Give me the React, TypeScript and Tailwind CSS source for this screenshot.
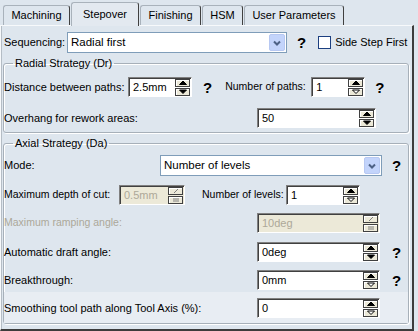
import React from 'react';

function Q({ className = '' }: { className?: string }) {
  return <span className={`text-[15px] font-bold leading-none text-black ${className}`}>?</span>;
}

function Arrow({ up, hollow, disabled }: { up?: boolean; hollow?: boolean; disabled?: boolean }) {
  const d = up ? 'M0.5 4.5 L4 1 L7.5 4.5 Z' : 'M0.5 1 L4 4.5 L7.5 1 Z';
  if (disabled) {
    return (
      <svg width="8" height="6" viewBox="0 0 8 6">
        <path d={up ? 'M2 5 L6 1' : 'M1 2 H7 M1 4 H7'} stroke="#808080" strokeWidth="1" fill="none" />
      </svg>
    );
  }
  return (
    <svg width="8" height="6" viewBox="0 0 8 6">
      <path d={d} fill={hollow ? 'white' : 'black'} stroke="black" strokeWidth="1" />
    </svg>
  );
}

function Spin({
  value,
  w,
  disabled,
  hollow,
}: {
  value: string;
  w: string;
  disabled?: boolean;
  hollow?: boolean;
}) {
  return (
    <div
      className={`flex h-[20px] shrink-0 border border-t-[#808080] border-l-[#808080] border-b-white border-r-white shadow-[inset_1px_1px_0_#404040] ${w} ${
        disabled ? 'bg-[#ece9d8]' : 'bg-white'
      }`}
    >
      <span className={`flex-1 pl-[4px] pt-[3px] text-[11px] leading-[13px] ${disabled ? 'text-[#aca899]' : 'text-black'}`}>
        {value}
      </span>
      <div className="flex w-[16px] flex-col gap-[1px] py-[1px] pr-[1px]">
        <div className="flex flex-1 items-center justify-center border border-[#404040] bg-[#ece9d8] shadow-[inset_1px_1px_0_white]">
          <Arrow up disabled={disabled} />
        </div>
        <div className="flex flex-1 items-center justify-center border border-[#404040] bg-[#ece9d8] shadow-[inset_1px_1px_0_white]">
          <Arrow hollow={hollow} disabled={disabled} />
        </div>
      </div>
    </div>
  );
}

function Combo({ value, w }: { value: string; w: string }) {
  return (
    <div className={`flex h-[21px] shrink-0 items-center border border-[#7f9db9] bg-white ${w}`}>
      <span className="flex-1 pl-[3px] pt-[1px] text-[11.5px] text-black">{value}</span>
      <div className="mr-[1px] flex h-[17px] w-[16px] items-center justify-center rounded-[2px] border border-[#b7c8f2] bg-[#c3d4fb]">
        <svg width="8" height="6" viewBox="0 0 8 6">
          <path d="M1 1.5 L4 4.5 L7 1.5" stroke="#4d6185" strokeWidth="2" fill="none" />
        </svg>
      </div>
    </div>
  );
}

function Tab({ label, w, active }: { label: string; w: string; active?: boolean }) {
  return (
    <div
      className={`flex items-center justify-center rounded-t-[3px] border-t border-l border-r border-t-[#a9b2bb] border-l-[#a9b2bb] border-r-[#404040] text-[11px] ${w} ${
        active ? 'relative z-10 -mb-px h-[24px] bg-[#e3e9f0]' : 'h-[20px] bg-[#dee6ee]'
      }`}
    >
      <span className="pb-[1px]">{label}</span>
    </div>
  );
}

function Legend({ children }: { children: React.ReactNode }) {
  return <legend className="ml-[9px] px-[2px] text-[11px] leading-[13px]">{children}</legend>;
}

export default function App() {
  return (
    <div className="h-[331px] w-[418px] overflow-hidden whitespace-nowrap bg-[#dee6ee] font-['Liberation_Sans',Arial,sans-serif] text-[10.5px] text-black">
      <div className="flex h-[25px] items-end gap-[1px] pl-[3px]">
        <Tab label="Machining" w="w-[67px]" />
        <Tab label="Stepover" w="w-[68px]" active />
        <Tab label="Finishing" w="w-[61px]" />
        <Tab label="HSM" w="w-[41px]" />
        <Tab label="User Parameters" w="w-[100px]" />
      </div>

      <div className="w-[414px] border-t border-l border-r-2 border-b-2 border-t-[#f7f9fb] border-l-[#f7f9fb] border-r-[#3c3c3c] border-b-[#3c3c3c] pb-[5px] shadow-[inset_1px_0_0_#b5bdc5]">
        <div className="mt-[6px] flex h-[21px] items-center pl-[3px]">
          <span className="w-[63px] shrink-0 text-[11px]">Sequencing:</span>
          <Combo value="Radial first" w="w-[220px]" />
          <Q className="ml-[10px]" />
          <div className="ml-[12px] h-[13px] w-[13px] shrink-0 border border-[#1c3f80] bg-white" />
          <span className="ml-[4px] text-[11px]">Side Step First</span>
        </div>

        <fieldset className="ml-[2px] mt-[4px] w-[406px] rounded-[3px] border border-[#a7b0b9] pb-[4px] shadow-[1px_1px_0_white,inset_1px_1px_0_white]">
          <Legend>Radial Strategy (Dr)</Legend>
          <div className="mt-[7px] flex h-[20px] items-center">
            <span className="w-[124px] shrink-0 text-[11px]">Distance between paths:</span>
            <Spin value="2.5mm" w="w-[64px]" />
            <Q className="ml-[11px]" />
            <span className="ml-[13px] w-[86px] shrink-0">Number of paths:</span>
            <Spin value="1" w="w-[54px]" hollow />
            <Q className="ml-[10px]" />
          </div>
          <div className="mt-[11px] flex h-[20px] items-center">
            <span className="w-[253px] shrink-0 text-[11px]">Overhang for rework areas:</span>
            <Spin value="50" w="w-[119px]" />
          </div>
        </fieldset>

        <fieldset className="ml-[2px] mt-[4px] w-[406px] rounded-[3px] border border-[#a7b0b9] shadow-[1px_1px_0_white,inset_1px_1px_0_white]">
          <Legend>Axial Strategy (Da)</Legend>
          <div className="mt-[5px] flex h-[21px] items-center">
            <span className="w-[156px] shrink-0 self-start pt-[2px] text-[11px]">Mode:</span>
            <Combo value="Number of levels" w="w-[222px]" />
            <Q className="ml-[10px]" />
          </div>
          <div className="mt-[9px] flex h-[20px] items-center">
            <span className="w-[115px] shrink-0">Maximum depth of cut:</span>
            <Spin value="0.5mm" w="w-[66px]" disabled />
            <span className="ml-[17px] w-[84px] shrink-0">Number of levels:</span>
            <Spin value="1" w="w-[74px]" hollow />
          </div>
          <div className="mt-[8px] flex h-[20px] items-center">
            <span className="w-[253px] shrink-0 text-[#aca899]">Maximum ramping angle:</span>
            <Spin value="10deg" w="w-[123px]" disabled />
          </div>
          <div className="mt-[9px] flex h-[20px] items-center">
            <span className="w-[253px] shrink-0 text-[11px]">Automatic draft angle:</span>
            <Spin value="0deg" w="w-[123px]" />
            <Q className="ml-[12px]" />
          </div>
          <div className="mt-[8px] flex h-[20px] items-center">
            <span className="w-[253px] shrink-0 text-[11px]">Breakthrough:</span>
            <Spin value="0mm" w="w-[123px]" hollow />
            <Q className="ml-[12px]" />
          </div>
          <div className="mt-[2px] bg-[#e8edf3] pt-[6px] pb-[5px]">
            <div className="flex h-[20px] items-center">
              <span className="w-[253px] shrink-0 text-[11px]">Smoothing tool path along Tool Axis (%):</span>
              <Spin value="0" w="w-[123px]" hollow />
            </div>
          </div>
        </fieldset>
      </div>
    </div>
  );
}
